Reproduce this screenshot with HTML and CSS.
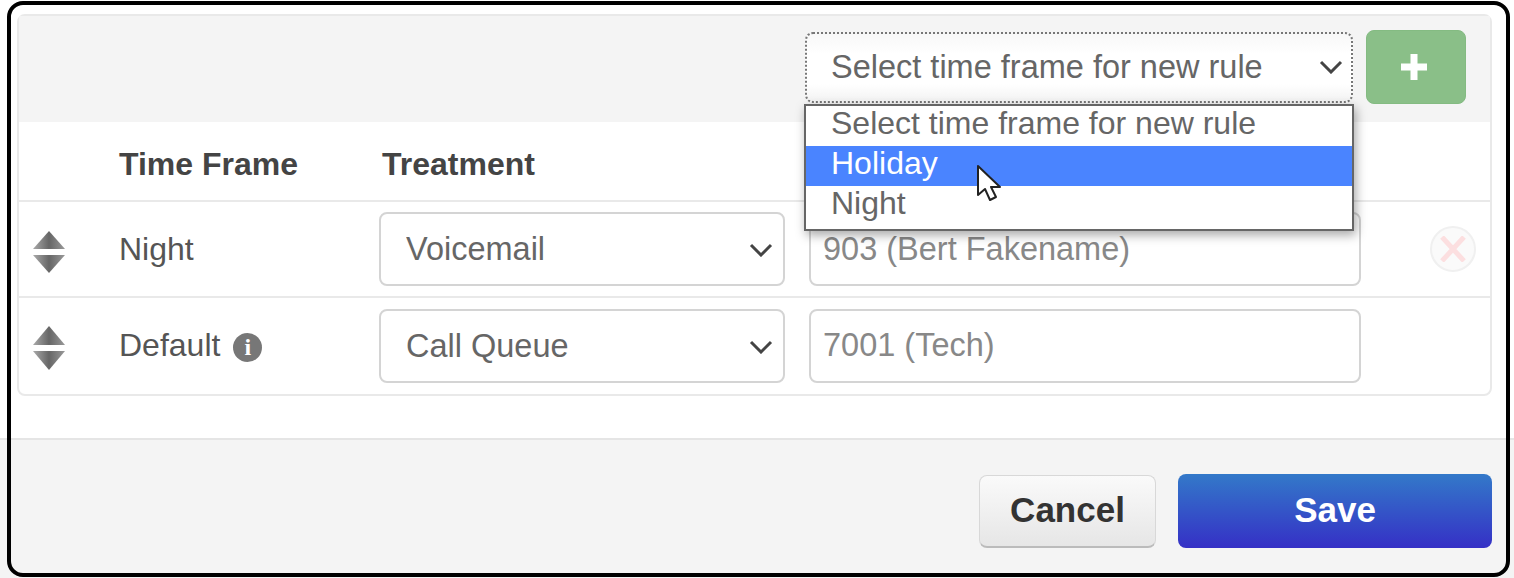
FILE: index.html
```html
<!DOCTYPE html>
<html lang="en">
<head>
    <meta charset="UTF-8">
    <meta name="viewport" content="width=device-width, initial-scale=1.0">
    <title>Time Frame Rules</title>
    <link rel="stylesheet" href="styles.css">
</head>
<body>
    <svg class="defs" width="0" height="0">
        <defs>
            <linearGradient id="sortFill">
                <stop offset="0" stop-color="#aaa"/>
                <stop offset="0.5" stop-color="#666"/>
                <stop offset="1" stop-color="#999"/>
            </linearGradient>
        </defs>
    </svg>

    <div class="panel">
        <div class="panel-head">
            <div class="select-wrap new-rule">
                <select class="select new-rule-select">
                    <option>Select time frame for new rule</option>
                    <option>Holiday</option>
                    <option>Night</option>
                </select>
                <svg class="chevron" width="24" height="14" viewBox="0 0 24 14"><path d="M2 2l10 10L22 2" fill="none" stroke="#444" stroke-width="3"/></svg>
                <ul class="menu">
                    <li>Select time frame for new rule</li>
                    <li class="hover">Holiday</li>
                    <li>Night</li>
                </ul>
                <svg class="cursor" width="28" height="40" viewBox="0 0 28 40"><path d="M2 2v29l7-6 5 11 6-3-5-10h9z" fill="#fff" stroke="#222" stroke-width="2" stroke-linejoin="round"/></svg>
            </div>
            <button class="btn-add" type="button">
                <svg width="28" height="28" viewBox="0 0 28 28"><path d="M14 1v26M1 14h26" stroke="#fff" stroke-width="7"/></svg>
            </button>
        </div>

        <div class="row row-head">
            <div></div>
            <div class="cell-name">Time Frame</div>
            <div class="cell-treat">Treatment</div>
        </div>

        <div class="row row-one">
            <div class="sort">
                <svg width="34" height="42" viewBox="0 0 34 42"><path d="M17 0l16 18H1z" fill="url(#sortFill)"/><path d="M17 42l16-18H1z" fill="url(#sortFill)"/></svg>
            </div>
            <div class="cell-name">Night</div>
            <div class="select-wrap">
                <select class="select">
                    <option>Voicemail</option>
                </select>
                <svg class="chevron" width="24" height="14" viewBox="0 0 24 14"><path d="M2 2l10 10L22 2" fill="none" stroke="#444" stroke-width="3"/></svg>
            </div>
            <input class="ext" type="text" value="903 (Bert Fakename)">
            <div class="remove">
                <svg width="26" height="26" viewBox="0 0 26 26"><path d="M2 1l22 24M24 1L2 25" stroke="#fcdfe0" stroke-width="5"/></svg>
            </div>
        </div>

        <div class="row row-two">
            <div class="sort">
                <svg width="34" height="44" viewBox="0 0 34 44"><path d="M17 0l16 19H1z" fill="url(#sortFill)"/><path d="M17 44l16-19H1z" fill="url(#sortFill)"/></svg>
            </div>
            <div class="cell-name">Default <span class="info">i</span></div>
            <div class="select-wrap">
                <select class="select">
                    <option>Call Queue</option>
                </select>
                <svg class="chevron" width="24" height="14" viewBox="0 0 24 14"><path d="M2 2l10 10L22 2" fill="none" stroke="#444" stroke-width="3"/></svg>
            </div>
            <input class="ext" type="text" value="7001 (Tech)">
        </div>
    </div>

    <div class="footer">
        <button class="btn btn-cancel" type="button">Cancel</button>
        <button class="btn btn-save" type="button">Save</button>
    </div>

    <div class="frame"></div>
</body>
</html>
```

FILE: styles.css
```css
html, body {
    height: 100%;
}

body {
    margin: 0;
    font-family: "Liberation Sans", Arial, sans-serif;
    font-size: 32px;
    color: #555;
    background-color: #fff;
    display: flex;
    flex-direction: column;
    overflow: hidden;
}

.defs {
    position: absolute;
}

.frame {
    position: absolute;
    left: 7px;
    top: 1px;
    width: 1503px;
    height: 576px;
    box-sizing: border-box;
    border: 4px solid #000;
    border-radius: 16px;
    pointer-events: none;
}

.panel {
    box-sizing: border-box;
    width: 1475px;
    height: 382px;
    margin: 14px 0 0 17px;
    border: 2px solid #e9e9e9;
    border-radius: 8px;
}

.panel-head {
    height: 106px;
    background-color: #f4f4f4;
    display: flex;
    justify-content: flex-end;
    align-items: flex-start;
    gap: 13px;
    padding: 14px 24px 0 0;
    box-sizing: border-box;
}

.row {
    display: grid;
    grid-template-columns: 100px 260px 406px 552px 1fr;
    align-items: center;
    border-bottom: 2px solid #e9e9e9;
}

.row-head {
    height: 72px;
    padding-top: 6px;
    font-weight: bold;
    color: #444;
}

.row-one {
    height: 94px;
}

.row-two {
    height: 95px;
    border-bottom: none;
}

.cell-treat {
    padding-left: 3px;
}

.sort {
    display: flex;
    padding-left: 13px;
    padding-top: 5px;
}

.select-wrap {
    position: relative;
    width: 406px;
}

.select {
    display: block;
    width: 100%;
    height: 74px;
    box-sizing: border-box;
    padding: 0 60px 0 25px;
    font-family: inherit;
    font-size: 32.5px;
    color: #666;
    background-color: #fff;
    border: 2px solid #d4d4d4;
    border-radius: 8px;
    appearance: none;
}

.chevron {
    position: absolute;
    right: 12px;
    top: 31px;
}

.new-rule {
    width: 548px;
}

.new-rule-select {
    height: 71px;
    margin-top: 2px;
    padding-bottom: 2px;
    padding-left: 24px;
    border: 2px dotted #777;
    background: linear-gradient(#f8f8f8, #fff 30%, #fff 75%, #f3f3f3);
}

.new-rule .chevron {
    right: 10px;
    top: 30px;
}

.menu {
    position: absolute;
    left: -1px;
    top: 74px;
    width: 550px;
    box-sizing: border-box;
    margin: 0;
    padding: 0;
    list-style: none;
    background-color: #fff;
    border: 2px solid #666;
    box-shadow: 2px 4px 10px rgba(0, 0, 0, 0.35);
    z-index: 2;
}

.menu li {
    height: 40px;
    line-height: 34px;
    padding-left: 25px;
    color: #666;
}

.menu li:last-child {
    height: 43px;
}

.menu .hover {
    background-color: #4a84ff;
    color: #fff;
}

.cursor {
    position: absolute;
    left: 171px;
    top: 134px;
    z-index: 3;
}

.ext {
    width: 552px;
    height: 74px;
    box-sizing: border-box;
    padding: 0 12px;
    margin-left: 24px;
    font-family: inherit;
    font-size: 32.5px;
    color: #888;
    border: 2px solid #d4d4d4;
    border-radius: 8px;
}

.remove {
    width: 46px;
    height: 46px;
    box-sizing: border-box;
    margin-left: 93px;
    border: 2px solid #f0f0f0;
    border-radius: 50%;
    background-color: #fafafa;
    display: flex;
    align-items: center;
    justify-content: center;
}

.info {
    display: inline-block;
    width: 29px;
    height: 29px;
    margin-left: 4px;
    border-radius: 50%;
    background-color: #777;
    color: #fff;
    font-family: "Liberation Serif", serif;
    font-size: 24px;
    font-weight: bold;
    line-height: 29px;
    text-align: center;
    vertical-align: 1px;
}

.btn-add {
    width: 100px;
    height: 74px;
    padding: 0 4px 0 0;
    border: 1px solid #84bb82;
    border-radius: 8px;
    background-color: #8abf88;
    display: flex;
    align-items: center;
    justify-content: center;
}

.footer {
    flex: 1;
    margin-top: 42px;
    border-top: 2px solid #e5e5e5;
    background-color: #f4f4f4;
    display: flex;
    justify-content: flex-end;
    align-items: flex-start;
    gap: 22px;
    padding: 34px 22px 0 0;
}

.btn {
    height: 74px;
    padding: 0 0 3px;
    font-family: inherit;
    font-size: 35px;
    font-weight: bold;
    border-radius: 8px;
}

.btn-cancel {
    width: 177px;
    margin-top: 1px;
    height: 73px;
    color: #333;
    border: 1px solid #d8d8d8;
    border-bottom: 2px solid #bbb;
    background: linear-gradient(#fafafa, #e6e6e6);
}

.btn-save {
    width: 314px;
    color: #fff;
    border: none;
    background: linear-gradient(#3379c9, #3530c6);
}
```
